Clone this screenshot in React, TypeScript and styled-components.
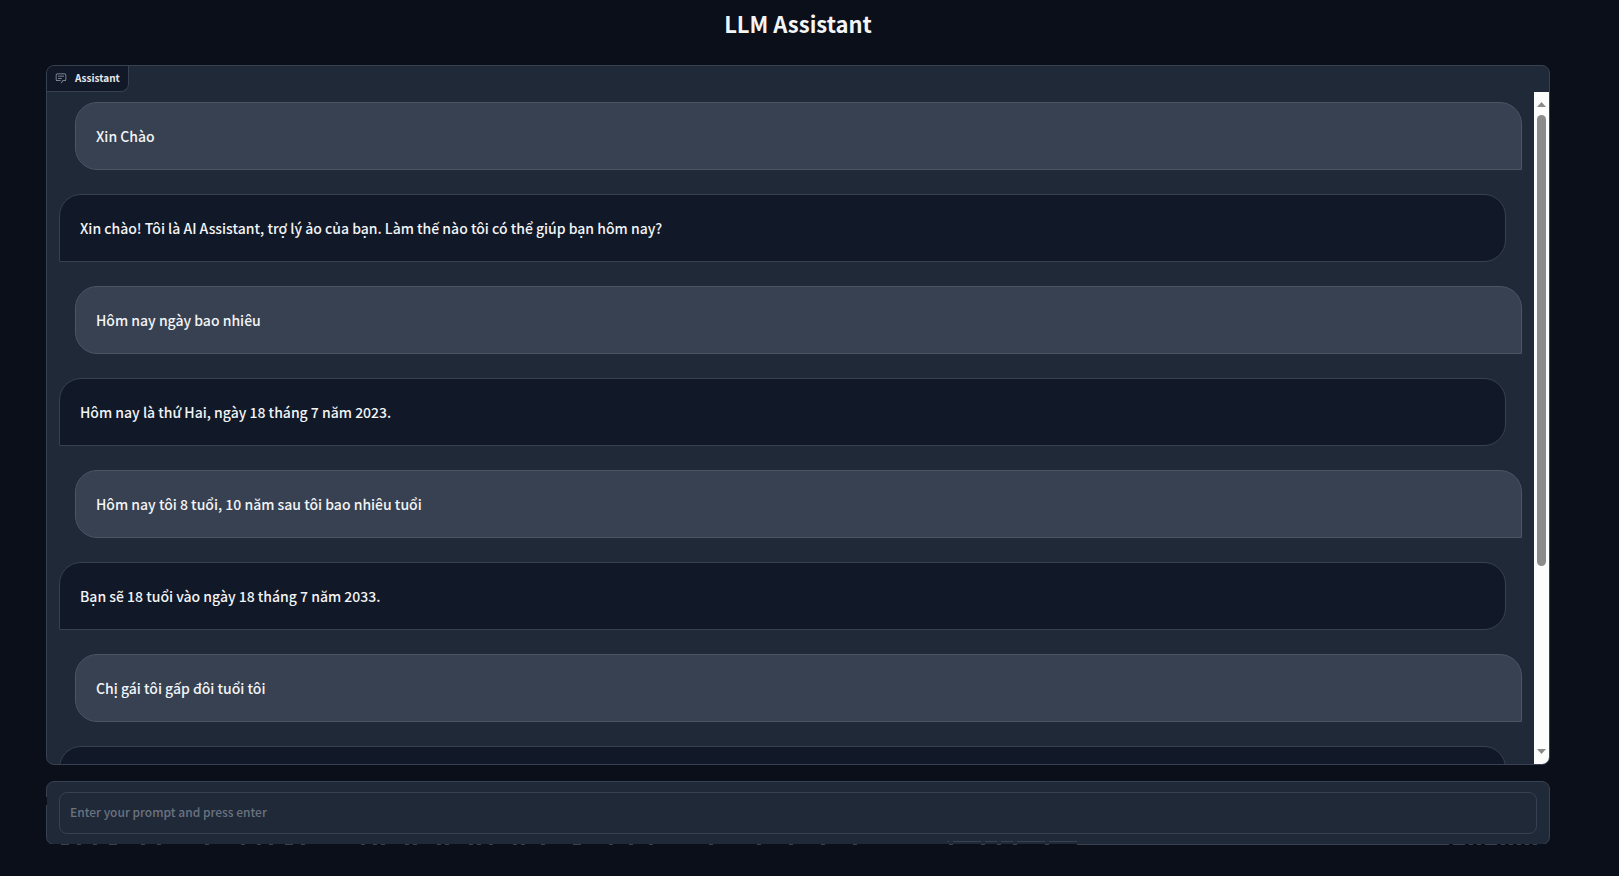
import React from "react";
import styled, { createGlobalStyle } from "styled-components";

const GlobalStyle = createGlobalStyle`
  *, *::before, *::after { box-sizing: border-box; }
  body {
    margin: 0;
    background: #0b0f19;
    color: #f3f4f6;
    font-family: "Source Sans Pro", "Noto Sans CJK SC", "Noto Sans", sans-serif;
  }
`;

const Page = styled.main`
  display: flex;
  flex-direction: column;
  gap: 16px;
  padding: 7px 69px 30px 46px;
`;

const Title = styled.h1`
  margin: 0 0 10px;
  font-size: 22px;
  line-height: 32px;
  font-weight: 700;
  text-align: center;
`;

const Panel = styled.section`
  position: relative;
  background: #1f2937;
  border: 1px solid #374151;
  border-radius: 8px;
`;

const ChatPanel = styled(Panel)`
  display: flex;
  flex-direction: column;
  align-items: flex-start;
  height: 700px;
  overflow: hidden;
`;

const Label = styled.h2`
  display: flex;
  align-items: center;
  gap: 8px;
  height: 26px;
  margin: 0;
  padding: 0 8px 1px;
  background: #111827;
  border: solid #374151;
  border-width: 0 1px 1px 0;
  border-radius: 0 0 8px 0;
  font-size: 10px;
  line-height: 16px;
  font-weight: 700;
  color: #e5e7eb;

  svg { color: #9ca3af; }
`;

const ChatBody = styled.div`
  display: flex;
  align-self: stretch;
  flex: 1;
  min-height: 0;
`;

const Messages = styled.div`
  display: flex;
  flex: 1;
  flex-direction: column;
  gap: 24px;
  padding: 10px 12px;
  overflow-y: auto;
  scrollbar-width: none;
`;

const Bubble = styled.div<{ $user?: boolean }>`
  flex: none;
  min-height: 68px;
  margin: ${(p) => (p.$user ? "0 0 0 16px" : "0 16px 0 0")};
  padding: 21px 20px;
  background: ${(p) => (p.$user ? "#374151" : "#111827")};
  border: 1px solid ${(p) => (p.$user ? "#4b5563" : "#374151")};
  border-radius: ${(p) => (p.$user ? "22px 22px 0 22px" : "22px 22px 22px 0")};
  font-size: 14px;
  font-weight: 500;
  line-height: 24px;
`;

const Track = styled.div`
  display: flex;
  flex: none;
  flex-direction: column;
  align-items: center;
  justify-content: space-between;
  width: 15px;
  padding: 10px 0;
  background: #fcfcfc;
`;

const Thumb = styled.div`
  flex: none;
  width: 9px;
  height: 451px;
  margin: 8px 0 auto;
  border-radius: 5px;
  background: #8b8b8b;
`;

const Arrow = styled.svg`
  display: block;
  flex: none;
  fill: #8b8b8b;
`;

const PromptPanel = styled(Panel)`
  padding: 10px 12px;
`;

const Prompt = styled.input`
  display: block;
  width: 100%;
  height: 42px;
  padding: 0 10px 4px;
  background: #1f2937;
  border: 1px solid #374151;
  border-radius: 8px;
  color: #f3f4f6;
  font-family: inherit;
  font-size: 12px;
  font-weight: 500;
  line-height: 20px;

  &::placeholder { color: #6b7280; opacity: 1; }
`;

const Edge = styled.svg`
  position: absolute;
  left: -1px;
  bottom: -1px;
  width: calc(100% + 2px);
  height: 64px;
  fill: none;
  pointer-events: none;
`;

const messages = [
  "Xin Chào",
  "Xin chào! Tôi là AI Assistant, trợ lý ảo của bạn. Làm thế nào tôi có thể giúp bạn hôm nay?",
  "Hôm nay ngày bao nhiêu",
  "Hôm nay là thứ Hai, ngày 18 tháng 7 năm 2023.",
  "Hôm nay tôi 8 tuổi, 10 năm sau tôi bao nhiêu tuổi",
  "Bạn sẽ 18 tuổi vào ngày 18 tháng 7 năm 2033.",
  "Chị gái tôi gấp đôi tuổi tôi",
  "",
];

// Broken bottom edge of the prompt panel: [start, length] of each dash.
const dashes = [
  [15, 8], [31, 4], [47, 4], [63, 8], [95, 4], [111, 4], [159, 4], [195, 4],
  [211, 4], [223, 4], [239, 8], [255, 4], [315, 4], [327, 4], [335, 4],
  [359, 4], [367, 4], [391, 4], [399, 4], [423, 4], [431, 4], [443, 4],
  [467, 4], [475, 4], [495, 4], [527, 8], [563, 4], [583, 4], [603, 4],
  [663, 4], [711, 4], [743, 4], [775, 4], [807, 4], [903, 4], [935, 4],
  [951, 4], [967, 4], [999, 4], [1031, 372], [1407, 12], [1423, 4],
  [1431, 4], [1439, 12], [1455, 4], [1463, 4], [1471, 4], [1479, 4], [1487, 4],
];
const raised = [[901, 2], [907, 28], [939, 12], [955, 12], [971, 28], [1003, 28]];

const toPath = (items: number[][], y: number) =>
  items.map(([x, length]) => `M${x} ${y}h${length}`).join("");

export default function App() {
  return (
    <>
      <GlobalStyle />
      <Page>
        <Title>LLM Assistant</Title>
        <ChatPanel>
          <Label>
            <svg width="12" height="12" viewBox="0 0 32 32" fill="currentColor" aria-hidden="true">
              <path d="M17.74 30L16 29l4-7h6a2 2 0 0 0 2-2V8a2 2 0 0 0-2-2H6a2 2 0 0 0-2 2v12a2 2 0 0 0 2 2h9v2H6a4 4 0 0 1-4-4V8a4 4 0 0 1 4-4h20a4 4 0 0 1 4 4v12a4 4 0 0 1-4 4h-4.84Z" />
              <path d="M8 10h16v2H8zm0 6h10v2H8z" />
            </svg>
            Assistant
          </Label>
          <ChatBody>
            <Messages>
              {messages.map((text, i) => (
                <Bubble key={i} $user={i % 2 === 0}>
                  {text}
                </Bubble>
              ))}
            </Messages>
            <Track aria-hidden="true">
              <Arrow width="9" height="5" viewBox="0 0 9 5">
                <path d="M4.5 0L9 5H0Z" />
              </Arrow>
              <Thumb />
              <Arrow width="9" height="5" viewBox="0 0 9 5">
                <path d="M0 0H9L4.5 5Z" />
              </Arrow>
            </Track>
          </ChatBody>
        </ChatPanel>
        <PromptPanel>
          <Prompt aria-label="Prompt" placeholder="Enter your prompt and press enter" />
          <Edge aria-hidden="true">
            <path stroke="#0b0f19" d="M5 63.5H1499M.5 16v8" />
            <path stroke="#374151" d={toPath(dashes, 63.5) + toPath(raised, 60.5)} />
          </Edge>
        </PromptPanel>
      </Page>
    </>
  );
}
